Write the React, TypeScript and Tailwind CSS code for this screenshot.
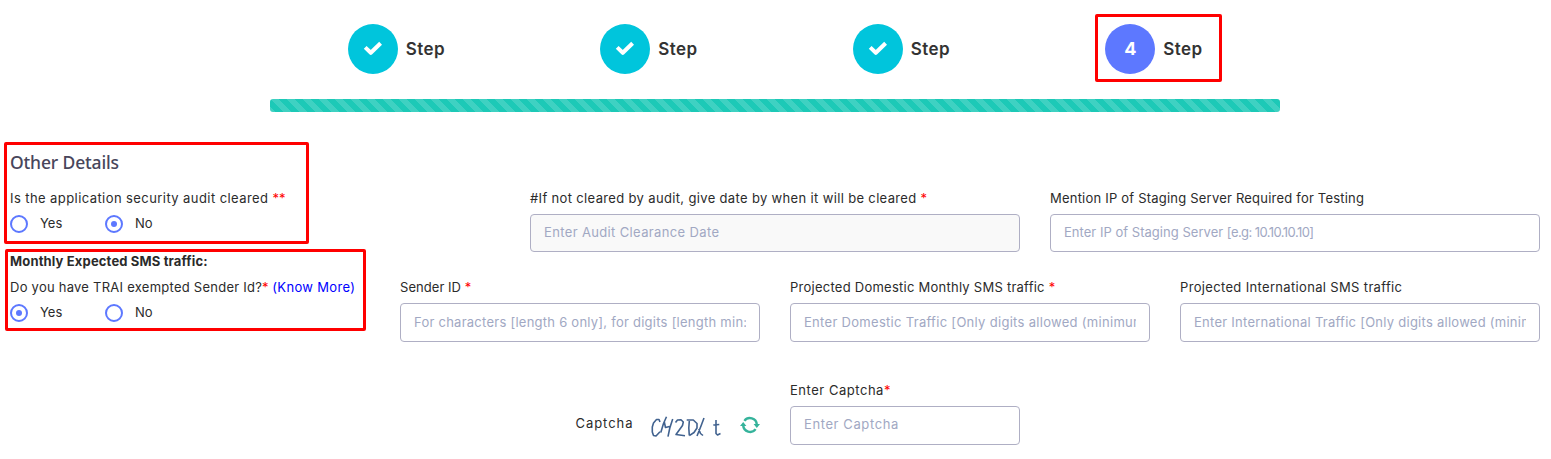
import type { ReactNode } from 'react';

function Step({ done, n }: { done?: boolean; n?: number }) {
  return (
    <div className="relative flex h-[50px] flex-1 items-center justify-center">
      <div className="flex w-[97px] items-center gap-2">
        <div className={`flex size-[50px] shrink-0 items-center justify-center rounded-full ${done ? 'bg-[#00c5dc]' : 'bg-[#5d78ff]'}`}>
          {done ? (
            <svg viewBox="0 0 20 16" className="h-4 w-5" fill="none" stroke="#fff" strokeWidth="4">
              <path d="M2.2 6.4 L7.8 11.8 L17.6 2.2" strokeLinejoin="round" strokeLinecap="butt" />
            </svg>
          ) : (
            <span className="pb-[2px] text-[18px] font-bold text-white">{n}</span>
          )}
        </div>
        <span className="pt-[2px] text-[17px] font-semibold tracking-[0.4px] whitespace-nowrap text-[#333]">Step</span>
      </div>
      {!done && <div className="absolute -top-[10px] left-[67px] h-[68px] w-[127px] rounded-[2px] border-3 border-[#ff0000]" />}
    </div>
  );
}

function Star({ children = '*' }: { children?: ReactNode }) {
  return <span className="tracking-[0px] text-[#ff0000]">{children}</span>;
}

function Radio({ label, checked }: { label: string; checked?: boolean }) {
  return (
    <label className="flex h-[18px] w-[95px] items-center gap-3">
      <span className="flex size-[18px] items-center justify-center rounded-full border-2 border-[#5d78ff]">
        {checked && <span className="size-[6px] rounded-full bg-[#5d78ff]" />}
      </span>
      <span>{label}</span>
    </label>
  );
}

type FieldProps = {
  label: string;
  labelClass: string;
  text: ReactNode;
  textClass: string;
  className: string;
  box?: string;
  required?: boolean;
};

function Field({ label, labelClass, text, textClass, className, box = 'h-[39px] leading-[37px] bg-white', required }: FieldProps) {
  return (
    <div className={className}>
      <div className="h-5 leading-5 whitespace-nowrap">
        <span className={labelClass}>{label}</span>
        {required && <Star />}
      </div>
      <div className={`mt-[6px] rounded border border-[#afafc4] px-[13px] ${box}`}>
        <div className={`overflow-hidden whitespace-nowrap text-[#a1a8c3] ${textClass}`}>{text}</div>
      </div>
    </div>
  );
}

export default function App() {
  return (
    <main className="h-[459px] w-[1551px] overflow-hidden bg-white font-['Inter',sans-serif] text-[13px] text-[#2b2b2b]">
      <header className="ml-[270px] w-[1010px] pt-6">
        <div className="flex">
          <Step done />
          <Step done />
          <Step done />
          <Step n={4} />
        </div>
        <div className="mt-[25px] h-[13px] rounded-[3px] bg-[#1dc9b7] bg-[linear-gradient(45deg,rgba(255,255,255,0.15)_25%,transparent_25%,transparent_50%,rgba(255,255,255,0.15)_50%,rgba(255,255,255,0.15)_75%,transparent_75%,transparent)] bg-[length:16px_16px]" />
      </header>

      <section className="relative mt-[30px] h-[107px] pl-[10px]">
        <div className="absolute top-0 left-1 h-[102px] w-[305px] rounded-[2px] border-3 border-[#ff0000]" />
        <h2 className="pt-[8px] font-['Noto_Sans',sans-serif] text-[17.5px] leading-6 font-medium tracking-[-0.15px] text-[#48465b]">Other Details</h2>
        <div className="mt-[14px] flex">
          <div className="w-[520px]">
            <div className="h-5 leading-5 whitespace-nowrap">
              <span className="tracking-[0.42px]">Is the application security audit cleared </span>
              <Star>**</Star>
            </div>
            <div className="mt-[7px] flex">
              <Radio label="Yes" />
              <Radio label="No" checked />
            </div>
          </div>
          <Field className="mr-[30px] w-[490px]" label="#If not cleared by audit, give date by when it will be cleared " labelClass="tracking-[0.345px]" required text="Enter Audit Clearance Date" textClass="tracking-[0.36px]" box="h-[38px] leading-[35px] bg-[#f9f9f9]" />
          <Field
            className="w-[490px]"
            label="Mention IP of Staging Server Required for Testing"
            labelClass="tracking-[0.21px]"
            text={<>Enter IP of Staging Server <span className="tracking-[-0.57px]">[e.g: 10.10.10.10]</span></>}
            textClass="tracking-[0.03px]"
            box="h-[38px] leading-[35px] bg-white"
          />
        </div>
      </section>

      <section className="relative h-[93px] pl-[10px]">
        <div className="absolute top-0 left-[5px] h-[82px] w-[361px] rounded-[2px] border-3 border-[#ff0000]" />
        <h3 className="pt-[2px] leading-5 font-bold tracking-[0.15px]">Monthly Expected SMS traffic:</h3>
        <div className="mt-[6px] flex">
          <div className="w-[390px]">
            <div className="h-5 leading-5 whitespace-nowrap">
              <span className="tracking-[0.25px]">Do you have TRAI exempted Sender Id?</span>
              <Star /> <a className="tracking-[0.32px] text-[#0000ff]">(Know More)</a>
            </div>
            <div className="mt-[7px] flex">
              <Radio label="Yes" checked />
              <Radio label="No" />
            </div>
          </div>
          <Field className="mr-[30px] w-[360px]" label="Sender ID " labelClass="tracking-[0.05px]" required text="For characters [length 6 only], for digits [length min:3]" textClass="tracking-[0.25px]" />
          <Field className="mr-[30px] w-[360px]" label="Projected Domestic Monthly SMS traffic " labelClass="tracking-[0.25px]" required text="Enter Domestic Traffic [Only digits allowed (minimum" textClass="tracking-[0.3px]" />
          <Field className="w-[360px]" label="Projected International SMS traffic" labelClass="tracking-[0.34px]" text="Enter International Traffic [Only digits allowed (minimum" textClass="tracking-[0.26px]" />
        </div>
      </section>

      <section className="mt-[38px] flex pl-[575px]">
        <div className="mt-[33px] h-5 w-[76px] pl-[0.5px] leading-5 tracking-[0.95px]">Captcha</div>
        <svg viewBox="0 0 72 24" className="mt-[34px] h-6 w-[72px]" fill="none" stroke="#41628f" strokeWidth="1.6" strokeLinejoin="round">
          <path d="M9 8 L8 5.5 L5.5 5.5 L2.5 9 L1.3 13 L1.3 18 L2.5 21.5 L5 22 L9 17.7 M15.5 2.7 L12.5 9.5 L9.8 18.5 M13.3 8 L14.5 13.5 L18.5 12.5 M21.7 5 L18.8 14 L17 22.7 M24.5 8.5 L26.5 6 L30 5.7 L32.3 8 L31.5 11.5 L25 20.5 L34 21.7 M35.7 6 L42.3 6 L46 9.5 L46 14 L43 18.5 L38.3 21.7 M38.3 7 L37.8 14 L38.3 21.5 M53 4 L50 12 L46 22 M47.8 15 L49.5 19.5 L52 21.5 M65 6 L65 19.5 L66.5 21 L69.5 19.5 M62.3 11 L68.3 10.5" />
        </svg>
        <svg viewBox="0 0 20 18" className="mt-[36px] ml-[17px] h-[18px] w-5" fill="none" stroke="#35b39b" strokeWidth="2.4">
          <path d="M4.4 4.9 A6.9 6.9 0 0 1 16.8 8.6 M15.6 13.1 A6.9 6.9 0 0 1 3.2 9.4" />
          <path d="M0 10 L3.2 6 L6.4 10 Z M20 8 L16.8 12 L13.6 8 Z" fill="#35b39b" stroke="none" />
        </svg>
        <Field className="ml-[30px] w-[230px]" label="Enter Captcha" labelClass="tracking-[0.53px]" required text="Enter Captcha" textClass="tracking-[0.6px]" box="h-[39px] leading-[35px] bg-white" />
      </section>
    </main>
  );
}
